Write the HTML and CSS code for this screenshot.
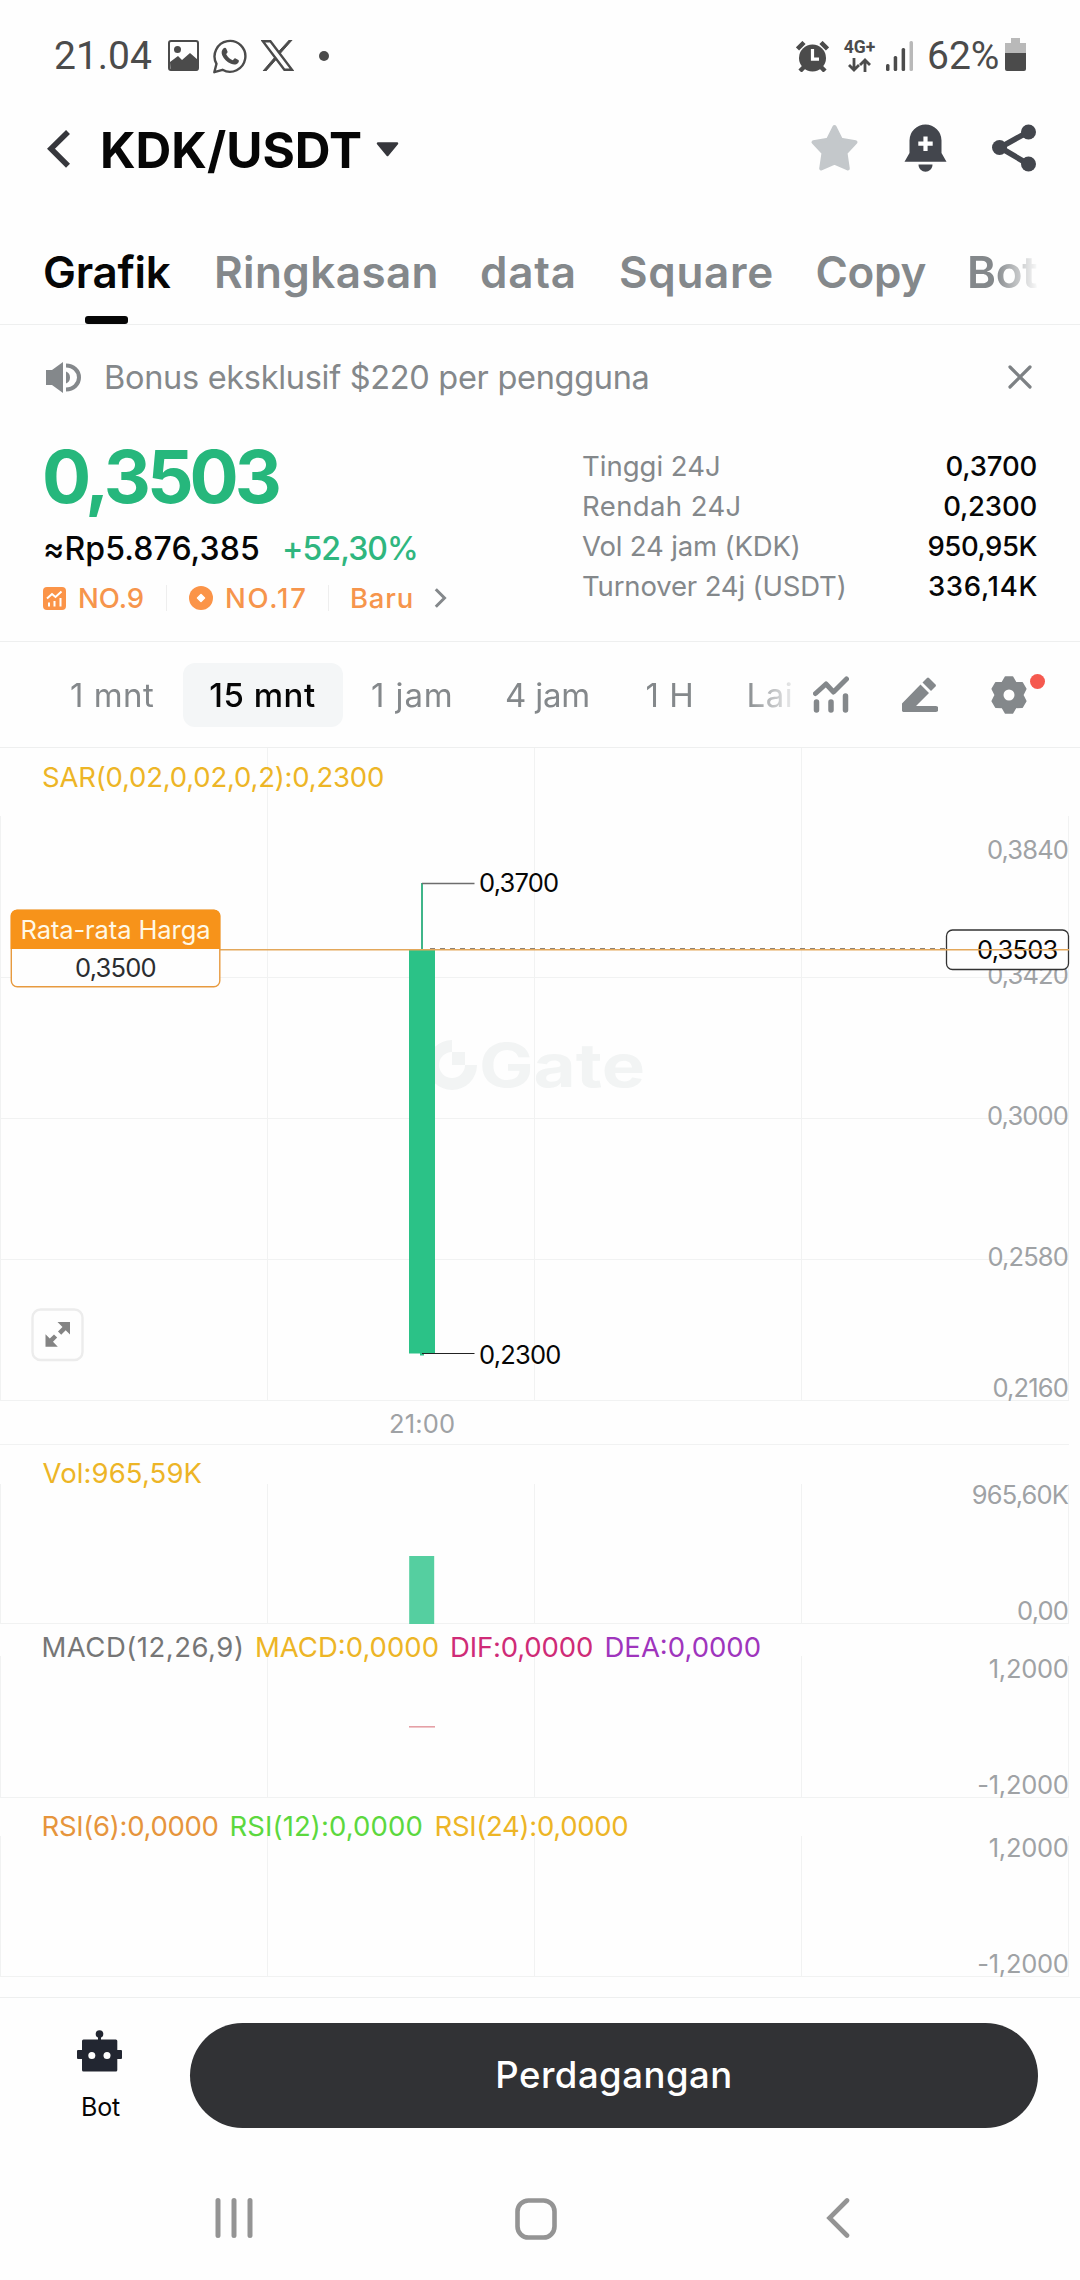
FILE: index.html
```html
<!DOCTYPE html>
<html lang="id">
<head>
<meta charset="utf-8">
<title>KDK/USDT</title>
<link rel="stylesheet" href="styles.css">
</head>
<body>
<div class="screen">

  <header class="status">
    <span class="clock">21.04</span>
    <svg class="st-image" width="31" height="31" viewBox="0 0 31 31"><rect x="1" y="1" width="29" height="29" rx="2" fill="none" stroke="#4b4b4b" stroke-width="2"/><circle cx="9.500" cy="9.500" r="3.500" fill="#4b4b4b"/><path d="M2 22l8-6 4 4 8-7 8 7v9a1.500 1.500 0 0 1-1.500 1.500h-26z" fill="#4b4b4b"/></svg>
    <svg class="st-wa" width="34" height="36" viewBox="0 0 34 36"><path d="M1.300 34.200l2.200-8.400A15.400 15.400 0 1 1 9.500 31.800z" fill="none" stroke="#4b4b4b" stroke-width="2.400" stroke-linejoin="round"/><path d="M10.300 10.600c1.200-1.300 2.500-1 3 .1l1.200 2.900c.4 1-.9 2-1.300 2.700 1.600 3 3.800 4.900 6.600 6 .8-.6 1.500-2.300 2.400-2l3.200 1.600c.8.5.6 2-.4 3.200-1.700 1.700-4 2-7 .7-4.300-1.700-7-4.600-8.800-8.500-1.100-2.600-.6-5 1.100-6.700z" fill="#4b4b4b"/></svg>
    <svg class="st-x" width="33" height="31" viewBox="0 0 33 31"><path d="M1.800 1.200h7.600L31 29.800h-7.600z" fill="none" stroke="#4b4b4b" stroke-width="2.400"/><path d="M28.300 0h2.800L18.900 13.800l-1.500-1.900zM2 31h2.900l10.600-12-1.500-2z" fill="#4b4b4b" stroke="#4b4b4b"/></svg>
    <i class="st-dot"></i>
    <div class="st-right">
      <svg width="33" height="31" viewBox="0 0 33 31"><g stroke="#4b4b4b" stroke-width="4.500"><path d="M1.500 8l6.500-6.500M31.500 8L25 1.500"/><path d="M4 30l5-5M29 30l-5-5"/></g><circle cx="16.500" cy="17" r="13.500" fill="#4b4b4b"/><path d="M16.500 8v10.200h6.500" fill="none" stroke="#fff" stroke-width="3.200"/></svg>
      <span class="net"><b>4G+</b><svg width="23" height="14" viewBox="0 0 23 14"><path d="M6 0v12M1 7l5 5 5-5M17 14V2M12 7l5-5 5 5" fill="none" stroke="#4b4b4b" stroke-width="2.800"/></svg></span>
      <svg class="st-signal" width="27" height="30" viewBox="0 0 27 30"><g fill="#4b4b4b"><rect y="23" width="3.500" height="7" rx="1.500"/><rect x="7.700" y="15" width="3.500" height="15" rx="1.500"/><rect x="15.600" y="7" width="3.500" height="23" rx="1.500"/></g><rect x="23.500" width="3.500" height="30" rx="1.500" fill="#b9b9b9"/></svg>
      <span class="batt-text">62%</span>
      <svg class="st-batt" width="21" height="33" viewBox="0 0 21 33"><path d="M6 0h9v5h6v10H0V5h6z" fill="#b9b9b9"/><path d="M0 15h21v16a2 2 0 0 1-2 2H2a2 2 0 0 1-2-2z" fill="#4b4b4b"/></svg>
    </div>
  </header>

  <div class="head">
    <svg width="24" height="39" viewBox="0 0 24 39"><path d="M21 2L4 18.700l17 17" fill="none" stroke="#36373c" stroke-width="5.600"/></svg>
    <h1 class="pair">KDK/USDT</h1>
    <svg width="23" height="15" viewBox="0 0 23 15"><path d="M2 1.500h19L11.500 13z" fill="#36373c" stroke="#36373c" stroke-width="2.500" stroke-linejoin="round"/></svg>
    <div class="head-actions">
      <svg width="49" height="48" viewBox="0 0 49 48"><path d="M24.500 3l6.400 12.600 14.600 2.600-10 10.600L37.800 44.500 24.500 38.600 11.200 44.500 13.500 28.800 3.500 18.200l14.600-2.600z" fill="#c4c8cb" stroke="#c4c8cb" stroke-width="4" stroke-linejoin="round"/></svg>
      <svg width="43" height="48" viewBox="0 0 43 48"><path d="M5.500 16.500a16 16 0 0 1 32 0v12.500l5 8.700H.5l5-8.700z" fill="#43464d"/><path d="M14.500 40.500h14c0 9.500-14 9.500-14 0z" fill="#43464d"/><path d="M21.500 12.500v14.500M14.300 19.700h14.400" stroke="#fff" stroke-width="4.200"/></svg>
      <svg width="44" height="48" viewBox="0 0 44 48"><path d="M36 8L8 23.500 36 40" fill="none" stroke="#43464d" stroke-width="5.600"/><g fill="#43464d"><circle cx="36.500" cy="8" r="7.500"/><circle cx="7.500" cy="23.500" r="7.500"/><circle cx="36.500" cy="40" r="7.500"/></g></svg>
    </div>
  </div>

  <nav class="tabs">
    <span class="tab active">Grafik</span><span class="tab">Ringkasan</span><span class="tab">data</span><span class="tab">Square</span><span class="tab">Copy</span><span class="tab">Bot</span>
  </nav>

  <div class="notice">
    <svg width="36" height="31" viewBox="0 0 36 31"><g fill="#84888b"><path d="M0 8h6L17 0v31L6 23H0z"/><path d="M20 9.500a6.500 6.500 0 0 1 0 12z"/></g><path d="M20 3.500c7.500 0 13 5.500 13 12s-5.500 12-13 12" fill="none" stroke="#84888b" stroke-width="4"/></svg>
    <span class="notice-text">Bonus eksklusif $220 per pengguna</span>
    <svg width="24" height="24" viewBox="0 0 24 24"><path d="M2 2l20 20M22 2L2 22" stroke="#7d8184" stroke-width="3.200" stroke-linecap="round"/></svg>
  </div>

  <section class="ticker">
    <div class="quote">
      <div class="last">0,3503</div>
      <div class="fiat"><span class="idr">≈Rp5.876,385</span><span class="change">+52,30%</span></div>
      <div class="tags">
        <svg width="23" height="23" viewBox="0 0 23 23"><rect width="23" height="23" rx="4" fill="#fb9448"/><path d="M4 11.500l5-4.500 3.500 3 6-5.500M6 19.500v-4M11.500 19.500v-5.500M17.500 19.500v-8.500" fill="none" stroke="#fff" stroke-width="2"/></svg>
        <span class="t-rank1">NO.9</span>
        <svg width="24" height="24" viewBox="0 0 24 24"><circle cx="12" cy="12" r="12" fill="#fb9448"/><path d="M12 8.500l3.500 3.500-3.500 3.500L8.500 12z" fill="#fff" stroke="#fff" stroke-width="1.500" stroke-linejoin="round"/></svg>
        <span class="t-rank2">NO.17</span>
        <span class="t-new">Baru</span>
        <svg width="13" height="20" viewBox="0 0 13 20"><path d="M1.800 1.200L10.500 10l-8.700 8.800" fill="none" stroke="#84888b" stroke-width="3"/></svg>
      </div>
    </div>
    <dl class="stats">
      <dt class="s1">Tinggi 24J</dt><dd class="n1">0,3700</dd>
      <dt class="s2">Rendah 24J</dt><dd class="n1">0,2300</dd>
      <dt class="s3">Vol 24 jam (KDK)</dt><dd>950,95K</dd>
      <dt class="s3">Turnover 24j (USDT)</dt><dd class="n4">336,14K</dd>
    </dl>
  </section>

  <div class="intervals">
    <div class="interval-list"><span>1 mnt</span><span class="pill">15 mnt</span><span class="i-jam">1 jam</span><span class="i-jam4">4 jam</span><span>1 H</span><span>Lai</span></div>
    <svg class="tool" width="36" height="37" viewBox="0 0 36 37"><path d="M2.500 17.500L13 8l7.500 8L33.500 3" fill="none" stroke="#84888b" stroke-width="5" stroke-linecap="round" stroke-linejoin="round"/><path d="M3.500 26v8M18 26v8M32.500 20v14" stroke="#84888b" stroke-width="5.500" stroke-linecap="round"/></svg>
    <svg class="tool" width="36" height="35" viewBox="0 0 36 35"><path d="M18.500 7.500l8.500 8.500-13 13h19.500a2.500 2.500 0 0 1 0 6H2a1.700 1.700 0 0 1-2-2v-6.500z" fill="#84888b"/><path d="M20.500 5.500L25 1q1-1 2 0l6.500 6.500q1 1 0 2L29 14z" fill="#84888b"/></svg>
    <span class="gear">
      <svg width="36" height="38" viewBox="-18 -19 36 38"><path d="M-3.500-18h7l3.300 5.600 6.500.2 3.500 6-3 6.200 3 6.200-3.500 6-6.500.2L3.500 18h-7l-3.300-5.600-6.500-.2-3.500-6 3-6.200-3-6.200 3.500-6 6.500-.2z" fill="#84888b" stroke="#84888b" stroke-width="1.500" stroke-linejoin="round"/><circle r="5.500" fill="#fefefe"/></svg>
      <i class="red-dot"></i>
    </span>
  </div>

  <svg class="panel" width="1080" height="697" viewBox="0 748 1080 697">
    <g class="grid">
      <path d="M267.500 748V1400M534.500 748V1400M801.500 748V1400M.5 816V1400M1068.500 816V1400"/>
      <path d="M0 977.500H1069M0 1118.500H1069M0 1259.500H1069M0 1400.500H1069M0 1444.500H1069"/>
    </g>
    <g fill="#f2f4f4">
      <path d="M452 1040a25 25 0 1 0 25 25h-12a13 13 0 1 1-13-13z"/>
      <rect x="452" y="1052" width="13" height="13"/>
      <text class="mark" x="479" y="1087" textLength="166" lengthAdjust="spacingAndGlyphs">Gate</text>
    </g>
    <text class="legend c-yellow" x="42" y="787" letter-spacing="-.2">SAR(0,02,0,02,0,2):0,2300</text>
    <g class="axis">
      <text x="1068" y="858.500">0,3840</text>
      <text x="1068" y="984">0,3420</text>
      <text x="1068" y="1125">0,3000</text>
      <text x="1068" y="1266">0,2580</text>
      <text x="1068" y="1397">0,2160</text>
    </g>
    <text class="time" x="389" y="1432.500">21:00</text>
    <path d="M422 883V950" stroke="#3fb589" stroke-width="2"/>
    <path d="M422 883.500H474.500" stroke="#6d6d6d" stroke-width="1.500"/>
    <rect x="409" y="949.500" width="26" height="404" fill="#2bc287"/>
    <rect x="420" y="1353" width="4" height="2.500" fill="#2bc287"/>
    <path d="M422 1353.500H474.500" stroke="#222" stroke-width="1.200"/>
    <text class="mark-price" x="479" y="892">0,3700</text>
    <text class="mark-price" x="479" y="1363.500">0,2300</text>
    <path d="M430 949H946" stroke="#6b5b48" stroke-width="1.500" stroke-dasharray="5 5"/>
    <rect x="946.500" y="930" width="122" height="39.500" rx="6" fill="#fefefe" stroke="#333" stroke-width="1.300"/>
    <text class="mark-price" x="977" y="959">0,3503</text>
    <path d="M220 949.700H1069" stroke="#e3a75a" stroke-width="1.400"/>
    <rect x="11.300" y="910.300" width="208.500" height="76.500" rx="6" fill="#fefefe" stroke="#e79a3f" stroke-width="1.400"/>
    <path d="M10.700 949v-33.300a6 6 0 0 1 6-6h197.600a6 6 0 0 1 6 6V949z" fill="#f7931a"/>
    <text class="avg-label" x="20.500" y="939">Rata-rata Harga</text>
    <text class="mark-price soft" x="75" y="976.500">0,3500</text>
    <rect x="32.500" y="1309.500" width="50" height="50.500" rx="8" fill="#fefefe" stroke="#ececec" stroke-width="2.400"/>
    <g fill="#848484"><path d="M57.500 1322H70v12.500l-4.300-4.300-4.500 4.500-3.200-3.200 4.500-4.500z"/><path d="M57.800 1346.800H45.500v-12.500l4.300 4.300 4.200-4.200 3.200 3.200-4.200 4.200z"/></g>
  </svg>

  <svg class="panel" width="1080" height="179" viewBox="0 1445 1080 179">
    <path class="grid" d="M.5 1484V1623M267.500 1484V1623M534.500 1484V1623M801.500 1484V1623M1068.500 1484V1623M0 1623.500H1069"/>
    <text class="legend c-yellow" x="42.500" y="1483" letter-spacing=".1">Vol:965,59K</text>
    <rect x="409.200" y="1556" width="25" height="68" fill="#55cfa0"/>
    <g class="axis"><text x="1068" y="1504">965,60K</text><text x="1068" y="1619.500">0,00</text></g>
  </svg>

  <svg class="panel" width="1080" height="174" viewBox="0 1624 1080 174">
    <path class="grid" d="M.5 1656V1797M267.500 1656V1797M534.500 1656V1797M801.500 1656V1797M1068.500 1656V1797M0 1797.500H1069"/>
    <text class="legend c-gray" x="41.500" y="1657" letter-spacing=".5">MACD(12,26,9)</text>
    <text class="legend c-yellow" x="255" y="1657">MACD:0,0000</text>
    <text class="legend c-pink" x="450" y="1657" letter-spacing="-.15">DIF:0,0000</text>
    <text class="legend c-purple" x="604.500" y="1657">DEA:0,0000</text>
    <path d="M409 1726.800H435" stroke="#e5a0a6" stroke-width="1.600"/>
    <g class="axis loose"><text x="1068.500" y="1678">1,2000</text><text x="1068.500" y="1793.500">-1,2000</text></g>
  </svg>

  <svg class="panel" width="1080" height="199" viewBox="0 1798 1080 199">
    <path class="grid" d="M.5 1836V1976M267.500 1836V1976M534.500 1836V1976M801.500 1836V1976M1068.500 1836V1976M0 1976.500H1069"/>
    <text class="legend c-orange" x="41.500" y="1836" letter-spacing="-.3">RSI(6):0,0000</text>
    <text class="legend c-green" x="229.500" y="1836" letter-spacing=".1">RSI(12):0,0000</text>
    <text class="legend c-yellow" x="434.500" y="1836" letter-spacing="-.3">RSI(24):0,0000</text>
    <g class="axis loose"><text x="1068.500" y="1857">1,2000</text><text x="1068.500" y="1973">-1,2000</text></g>
  </svg>

  <footer class="trade">
    <div class="bot">
      <svg width="45" height="42" viewBox="0 0 45 42"><g fill="#222631"><circle cx="22.500" cy="4" r="3.800"/><path d="M21 4h3v7h-3z"/><rect x="5" y="9.500" width="35.300" height="32" rx="1.500"/><rect y="20" width="45" height="9" rx="1"/></g><circle cx="14.800" cy="25.500" r="3.500" fill="#fefefe"/><circle cx="30" cy="25.500" r="3.500" fill="#fefefe"/></svg>
      <span>Bot</span>
    </div>
    <button class="cta">Perdagangan</button>
  </footer>

  <div class="sysnav">
    <svg width="38" height="40" viewBox="0 0 38 40"><path d="M3 2.500v35M19 2.500v35M35 2.500v35" stroke="#949494" stroke-width="5" stroke-linecap="round"/></svg>
    <svg class="nav-home" width="42" height="42" viewBox="0 0 42 42"><rect x="2.500" y="2.500" width="37" height="37" rx="11" fill="none" stroke="#949494" stroke-width="4.600"/></svg>
    <svg class="nav-back" width="24" height="40" viewBox="0 0 24 40"><path d="M21 2.500L3.500 20 21 37.500" fill="none" stroke="#949494" stroke-width="4.600" stroke-linecap="round"/></svg>
  </div>

</div>
</body>
</html>
```
FILE: styles.css
```css
* { box-sizing: border-box; margin: 0; padding: 0; }
body { background: #fefefe; color: #060606; font-family: Inter, "Liberation Sans", sans-serif; }
svg { display: block; flex: none; }
.screen { width: 1080px; height: 2280px; overflow: hidden; display: flex; flex-direction: column; white-space: nowrap; }
.screen > * { flex: none; }

.status { height: 112px; padding: 0 54px; display: flex; align-items: center; font-family: Roboto, sans-serif; font-size: 39px; color: #4b4b4b; }
.clock { width: 114px; }
.st-image, .st-x { margin-bottom: 1px; }
.st-wa { margin-left: 14px; }
.st-x { margin-left: 14px; }
.st-dot { width: 10px; height: 10px; margin-left: 25px; border-radius: 50%; background: #4b4b4b; }
.st-right { margin-left: auto; display: flex; align-items: center; }
.net { width: 31px; margin-left: 15px; height: 32px; display: flex; flex-direction: column; align-items: center; justify-content: space-between; }
.net b { font-size: 17.5px; line-height: 14px; }
.st-signal { margin-left: 11px; }
.batt-text { width: 76px; margin-left: 14px; }
.st-batt { margin-left: 2px; margin-bottom: 3px; }

.head { height: 75px; padding: 0 44px 0 47px; display: flex; align-items: center; }
.pair { width: 276px; margin-left: 29px; font-size: 49.5px; line-height: 60px; font-weight: 700; letter-spacing: 0; }
.head-actions { margin-left: auto; display: flex; gap: 45px; margin-bottom: 3px; }

.tabs { height: 138px; padding: 59px 0 0 43px; border-bottom: 1px solid #eeefef; display: grid; grid-template-columns: 171px 266px 139px 196.5px 151.5px 70px; width: 1080px; }
.tab { font-size: 44px; line-height: 52px; font-weight: 600; color: #84888b; letter-spacing: -.3px; }
.tab:nth-child(2) { letter-spacing: .4px; }
.tab:nth-child(3) { letter-spacing: .8px; }
.tab:nth-child(4) { letter-spacing: .7px; }
.tab:nth-child(6) { overflow: hidden; -webkit-mask-image: linear-gradient(90deg, #000 28px, transparent 72px); mask-image: linear-gradient(90deg, #000 28px, transparent 72px); }
.tab.active { color: #060606; }
.tab.active::after { content: ""; display: block; width: 43px; height: 8px; margin: 18px 0 0 42px; border-radius: 3px; background: #060606; }

.notice { height: 104px; padding: 0 48px 0 46px; display: flex; align-items: center; }
.notice-text { flex: 1; margin-left: 22px; font-size: 32.5px; letter-spacing: -.3px; color: #84888b; }

.ticker { height: 213px; padding: 8px 43px 0; border-bottom: 1px solid #eeefef; display: flex; justify-content: space-between; }
.last { font-size: 73px; line-height: 80px; font-weight: 650; letter-spacing: -4px; color: #26b77c; margin-left: -1px; }
.fiat { margin-top: 10px; font-size: 32px; line-height: 44px; font-weight: 500; display: flex; }
.idr { width: 239px; letter-spacing: .1px; }
.change { color: #2fb67f; letter-spacing: -.9px; }
.tags { margin-top: 9px; height: 36px; display: flex; align-items: center; font-size: 27.5px; line-height: 36px; font-weight: 500; color: #f6954c; }
.t-rank1 { width: 89px; margin: 0 22px 0 12px; border-right: 1px solid #eee; line-height: 26px; }
.t-rank2 { width: 104px; margin: 0 21px 0 12px; border-right: 1px solid #eee; line-height: 26px; letter-spacing: 1.8px; }
.t-new { width: 84px; letter-spacing: .8px; }
.stats { width: 455px; padding-top: 9px; display: grid; grid-template-columns: 1fr auto; grid-auto-rows: 40px; line-height: 40px; font-size: 27.5px; }
.stats dt { color: #84888b; }
.stats dd { font-weight: 500; text-align: right; letter-spacing: -.45px; }
.stats .n1 { letter-spacing: -.2px; }
.stats .n4 { letter-spacing: .7px; margin-right: -1px; }
.s2 { letter-spacing: .4px; }
.s3 { letter-spacing: -.15px; }

.intervals { height: 106px; border-bottom: 1px solid #eeefef; padding: 0 0 0 70px; display: flex; align-items: center; font-size: 33px; color: #84888b; }
.interval-list { width: 725px; display: grid; grid-template-columns: 111.5px 189.5px 134px 140.5px 101px 48px; line-height: 64px; letter-spacing: .5px; -webkit-mask-image: linear-gradient(90deg, #000 675px, transparent 732px); mask-image: linear-gradient(90deg, #000 675px, transparent 732px); }
.interval-list span { height: 64px; }
.pill { width: 160px; border-radius: 12px; background: #f4f6f7; color: #060606; font-weight: 500; text-align: center; margin-left: 1px; }
.interval-list .i-jam { letter-spacing: .9px; }
.interval-list .i-jam4 { letter-spacing: -.2px; }
.tool { margin-left: 18px; }
.tool + .tool { margin-left: 53px; }
.gear { position: relative; margin-left: 53px; }
.red-dot { position: absolute; left: 39px; top: -2px; width: 15px; height: 15px; border-radius: 50%; background: #f5594f; }

.panel text { font-family: Inter, "Liberation Sans", sans-serif; }
.grid { stroke: #f1f2f2; stroke-width: 1; fill: none; }
.legend { font-size: 27.5px; }
.c-yellow { fill: #edb526; }
.c-gray { fill: #767676; }
.c-pink { fill: #cf2b77; }
.c-purple { fill: #9f35bd; }
.c-orange { fill: #e6953c; }
.c-green { fill: #5cd83e; }
.axis { font-size: 25.5px; fill: #9fa2a5; text-anchor: end; letter-spacing: -.85px; }
.axis.loose { letter-spacing: -.3px; }
.time { font-size: 25.5px; fill: #9fa2a5; letter-spacing: .15px; }
.mark-price { font-size: 25.5px; fill: #060606; letter-spacing: -.8px; }
.mark-price.soft { fill: #2b2d30; }
.avg-label { font-size: 25.5px; fill: #fff8e6; letter-spacing: -.1px; }
.mark { font-size: 60px; font-weight: 700; }

.trade { height: 152px; border-top: 1px solid #eeefef; padding: 25px 42px 0 77px; display: flex; }
.bot { width: 45px; padding-top: 7px; display: flex; flex-direction: column; align-items: center; font-size: 25px; line-height: 30px; letter-spacing: -.2px; }
.bot span { margin-top: 20px; margin-left: 2px; }
.cta { flex: 1; height: 105px; margin-left: 68px; border: 0; border-radius: 53px; background: #313235; color: #fff; font: 500 36.5px/105px Inter, "Liberation Sans", sans-serif; letter-spacing: .5px; }

.sysnav { height: 131px; padding: 49px 0 0 215px; display: flex; align-items: flex-start; }
.nav-home { margin-left: 262px; }
.nav-back { margin-left: 269px; }
```
